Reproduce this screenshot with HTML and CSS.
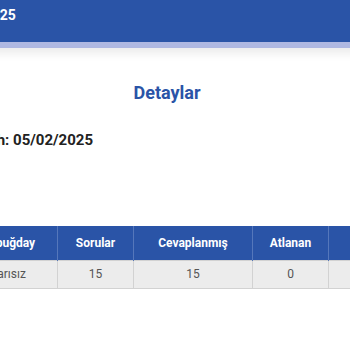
FILE: index.html
```html
<!DOCTYPE html>
<html>
	<head>
		<meta charset="utf-8">
		<title>Detaylar</title>
		<link rel="stylesheet" href="styles.css">
	</head>
	<body>
		<div class="page">
			<div class="topbar">
				<h1 class="topbar-title">Sınav Sonucu 05/02/2025</h1>
			</div>
			<h2 class="section-title">Detaylar</h2>
			<p class="date">Tarih: 05/02/2025</p>
			<table class="results">
				<thead>
					<tr>
						<th class="col-name">Karabuğday</th>
						<th>Sorular</th>
						<th class="col-wide">Cevaplanmış</th>
						<th>Atlanan</th>
						<th>Doğru</th>
					</tr>
				</thead>
				<tbody>
					<tr>
						<td class="col-name">Başarısız</td>
						<td>15</td>
						<td>15</td>
						<td>0</td>
						<td>9</td>
					</tr>
				</tbody>
			</table>
		</div>
	</body>
</html>
```

FILE: styles.css
```css
*{
	margin: 0;
	padding: 0;
	box-sizing: border-box;
}
body{
	font-family: Roboto, "Liberation Sans", sans-serif;
	background-color: #fff;
	overflow: hidden;
}
.page{
	width: 420px;
	margin-left: -43px;
}
.topbar{
	height: 48px;
	background-color: #2a54a7;
	border-bottom: 6px solid #afb8e2;
	box-shadow: 0 6px 8px rgba(0,0,0,.07);
	padding: 6px 0 0 0;
}
.topbar-title{
	font-size: 14px;
	font-weight: bold;
	color: #fff;
	line-height: 18px;
	text-align: left;
	margin-left: -105px;
}
.section-title{
	margin-top: 34px;
	font-size: 18px;
	line-height: 22px;
	font-weight: bold;
	color: #2a54a7;
	text-align: center;
}
.date{
	margin-top: 27px;
	padding-left: 14px;
	font-size: 15px;
	line-height: 18px;
	font-weight: bold;
	color: #222;
}
.results{
	margin-top: 77px;
	border-collapse: collapse;
	table-layout: fixed;
	width: 447px;
	font-size: 12px;
}
.results th,
.results td{
	width: 76px;
	text-align: center;
}
.results th{
	height: 34px;
	background-color: #2a54a7;
	color: #fff;
	font-weight: bold;
	border-left: 1px solid #5577bb;
}
.results td{
	height: 28px;
	background-color: #ececec;
	color: #555;
	border: 1px solid #d2d2d2;
}
.results .col-name{
	width: 100px;
	text-align: left;
	padding-left: 19px;
}
.results th.col-name{
	padding-left: 13px;
}
.results .col-wide{
	width: 119px;
}
```
